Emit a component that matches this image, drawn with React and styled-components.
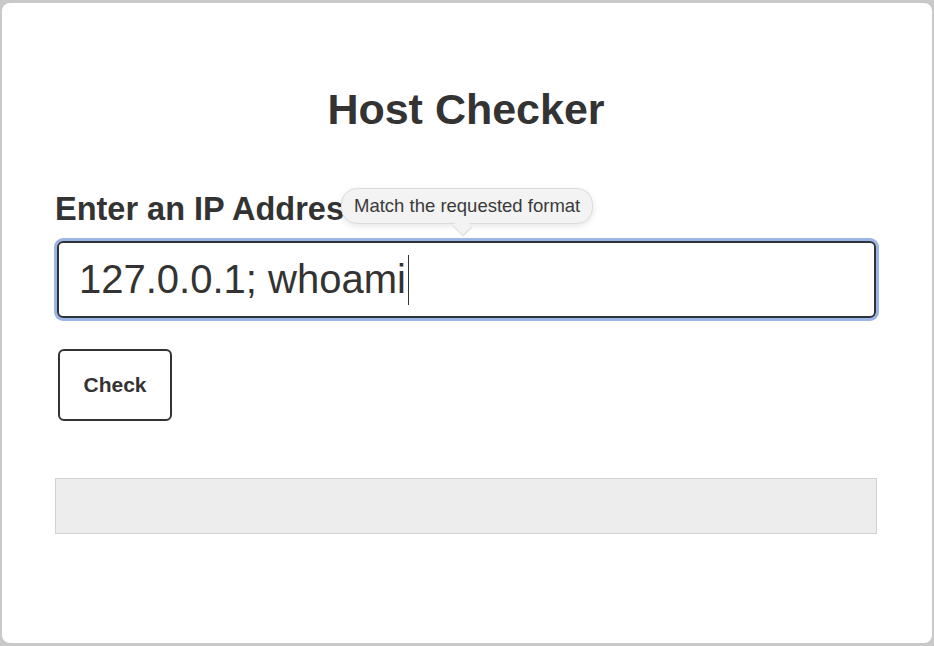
import React from 'react';
import styled, { createGlobalStyle } from 'styled-components';

const GlobalStyle = createGlobalStyle`
html, body {
  margin: 0;
  padding: 0;
  background: #c9c9c9;
}
* { box-sizing: border-box; }
`;

const Frame = styled.div`
width: 934px;
height: 646px;
padding: 3px 2px 3px 2px;
background: #c9c9c9;
`;

const Card = styled.div`
display: flex;
flex-flow: column;
height: 100%;
background: #ffffff;
border-radius: 8px;
padding: 82px 55px 0 53px;
font-family: "Liberation Sans", Arial, sans-serif;
color: #333333;
`;

const Title = styled.h1`
margin: 0;
font-size: 43px;
line-height: 49px;
font-weight: bold;
text-align: center;
`;

const FieldGroup = styled.div`
position: relative;
display: flex;
flex-flow: column;
margin-top: 57px;
`;

const Label = styled.label`
font-size: 32.5px;
line-height: 37px;
font-weight: bold;
`;

const Field = styled.div`
display: flex;
align-items: center;
height: 77px;
margin: 13px 1px 0 2px;
padding: 0 18px 0 20px;
border: 2px solid #2f3237;
border-radius: 6px;
box-shadow: 0 0 0 3px #9bb5e6;
font-size: 40px;
color: #333333;
`;

const Caret = styled.span`
display: inline-block;
width: 1px;
height: 50px;
margin-left: 2px;
background: #333333;
`;

const Tooltip = styled.div`
position: absolute;
left: 286px;
top: -3px;
height: 36px;
padding: 0 12px;
display: flex;
align-items: center;
background: #f3f3f3;
border: 1px solid #dcdcdc;
border-radius: 16px;
box-shadow: 0 2px 6px rgba(0, 0, 0, 0.1);
font-family: "Liberation Sans", Arial, sans-serif;
font-size: 18.5px;
color: #3a3a3a;
white-space: nowrap;

&::after {
  content: "";
  position: absolute;
  left: 113px;
  bottom: -11px;
  width: 14px;
  height: 14px;
  background: #f3f3f3;
  border-right: 1px solid #dcdcdc;
  border-bottom: 1px solid #dcdcdc;
  transform: rotate(45deg) scaleY(0.9);
}
`;

const Button = styled.button`
align-self: flex-start;
width: 114px;
height: 72px;
margin: 31px 0 0 3px;
background: #ffffff;
border: 2px solid #333333;
border-radius: 6px;
font-family: "Liberation Sans", Arial, sans-serif;
font-size: 21px;
font-weight: bold;
color: #333333;
`;

const Output = styled.div`
height: 56px;
margin-top: 57px;
background: #ededed;
border: 1px solid #d2d2d2;
`;

const App = () => (
  <>
    <GlobalStyle />
    <Frame>
      <Card>
        <Title>Host Checker</Title>
        <FieldGroup>
          <Label>Enter an IP Address:</Label>
          <Field>
            <span>127.0.0.1; whoami</span>
            <Caret />
          </Field>
          <Tooltip>Match the requested format</Tooltip>
        </FieldGroup>
        <Button>Check</Button>
        <Output />
      </Card>
    </Frame>
  </>
);

export default App;
